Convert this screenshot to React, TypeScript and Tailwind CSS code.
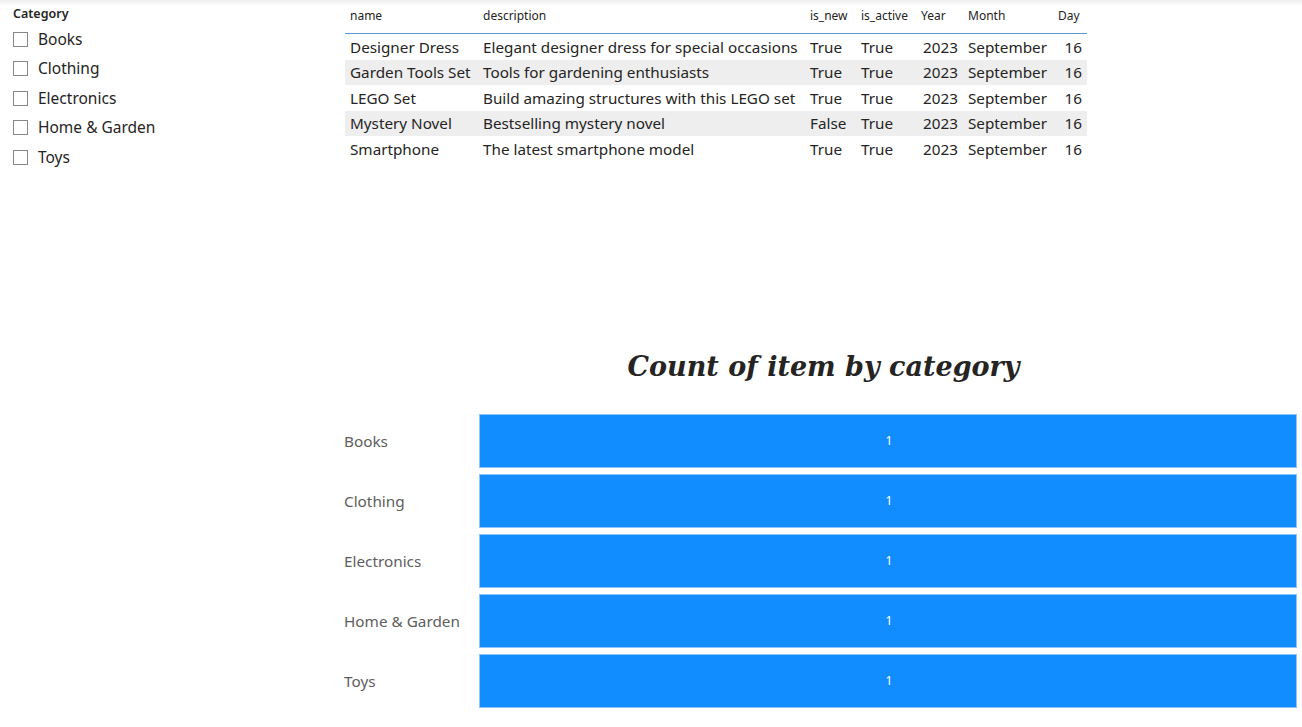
import React from "react";

const cats = ["Books", "Clothing", "Electronics", "Home & Garden", "Toys"];

const rows = [
  ["Designer Dress", "Elegant designer dress for special occasions", "True", "True", "2023", "September", "16"],
  ["Garden Tools Set", "Tools for gardening enthusiasts", "True", "True", "2023", "September", "16"],
  ["LEGO Set", "Build amazing structures with this LEGO set", "True", "True", "2023", "September", "16"],
  ["Mystery Novel", "Bestselling mystery novel", "False", "True", "2023", "September", "16"],
  ["Smartphone", "The latest smartphone model", "True", "True", "2023", "September", "16"],
];

const heads = ["name", "description", "is_new", "is_active", "Year", "Month", "Day"];

export default function App() {
  return (
    <div
      className="relative w-[1302px] h-[727px] bg-white overflow-hidden text-[#252423]"
      style={{ fontFamily: '"Noto Sans", "Open Sans", sans-serif' }}
    >
      <div className="pointer-events-none absolute left-0 top-0 w-full h-[6px] bg-gradient-to-b from-[rgba(0,0,0,0.07)] to-transparent" />
      <div className="flex h-[340px]">
        <div className="w-[345px] pl-[13px] pt-[5px]">
          <div className="text-[12.5px] font-semibold leading-[17px]">Category</div>
          <div className="flex flex-col mt-[2.5px]">
            {cats.map((c) => (
              <div key={c} className="flex items-center h-[29.5px]">
                <div className="w-[15px] h-[15px] border border-[#8a8886] bg-white" />
                <span className="ml-[10px] text-[15.5px] leading-none">{c}</span>
              </div>
            ))}
          </div>
        </div>
        <div className="flex flex-col">
          <div className="grid grid-cols-[133px_327px_51px_60px_47px_90px_34px] h-[34px] items-center pt-[1px] pb-[3px] text-[12px] border-b border-[#5b9bd5]">
            {heads.map((h) => (
              <div key={h} className="pl-[5px] whitespace-nowrap">{h}</div>
            ))}
          </div>
          {rows.map((r, i) => (
            <div
              key={i}
              className={
                "grid grid-cols-[133px_327px_51px_60px_47px_90px_34px] h-[25.5px] items-center pt-[1px] text-[15.25px] " +
                (i % 2 === 1 ? "bg-[#eeeeee]" : "bg-white")
              }
            >
              {r.map((v, j) => (
                <div
                  key={j}
                  className={
                    "whitespace-nowrap " + (j === 4 || j === 6 ? "text-right pr-[5px]" : "pl-[5px]")
                  }
                >
                  {v}
                </div>
              ))}
            </div>
          ))}
        </div>
      </div>
      <div className="ml-[344px] mr-[5px] flex flex-col">
        <div
          className="h-[50px] flex items-center justify-center pl-[6px] pt-[4px] text-[27px] font-bold italic text-[#252423]"
          style={{ fontFamily: '"DejaVu Serif", "Liberation Serif", serif' }}
        >
          Count of item by category
        </div>
        <div className="flex flex-col gap-[6px] pt-[24px]">
          {cats.map((c) => (
            <div key={c} className="flex h-[54px]">
              <div className="w-[135px] flex items-center text-[15.3px] text-[#605e5c]">{c}</div>
              <div className="flex-1 bg-[#118dff] border border-[#8cc6fb] flex items-center justify-center text-white text-[12px]">
                <span className="ml-[2px]">1</span>
              </div>
            </div>
          ))}
        </div>
      </div>
    </div>
  );
}
